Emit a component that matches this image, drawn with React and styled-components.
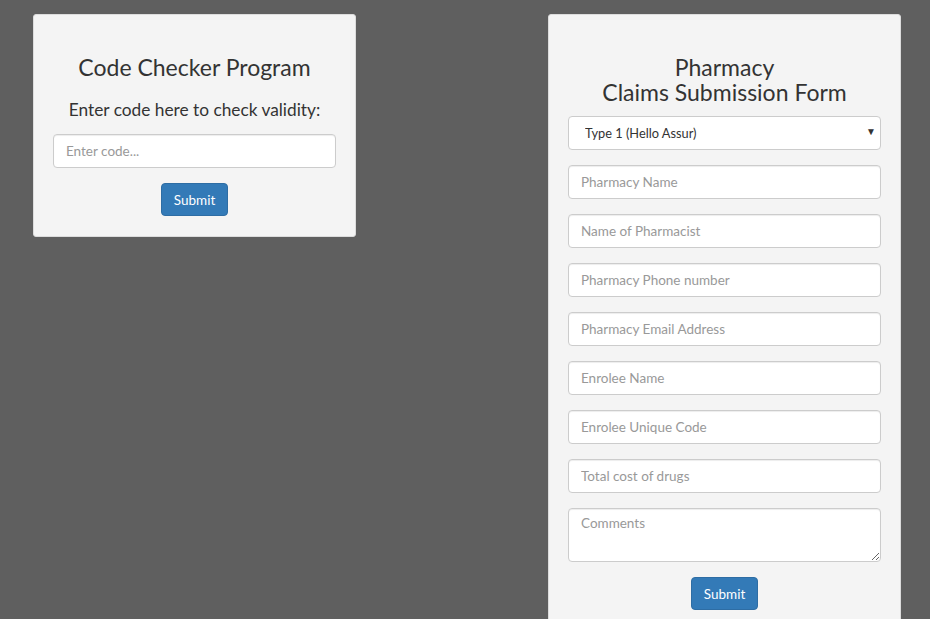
import React from "react";
import styled, { createGlobalStyle } from "styled-components";

const Global = createGlobalStyle`
  html, body { margin: 0; padding: 0; background: #5f5f5f; }
  body { font-family: Lato, "Open Sans", "Liberation Sans", sans-serif; color: #333; }
  * { box-sizing: border-box; }
`;

const Page = styled.div`
  display: flex;
  align-items: flex-start;
  gap: 192px;
  padding: 14px 0 0 33px;
  min-height: 619px;
  overflow: hidden;
`;

const Card = styled.div`
  flex: 0 0 auto;
  width: ${(p) => p.$w}px;
  background: #f4f4f4;
  border: 1px solid #dcdcdc;
  border-radius: 3px;
  padding: ${(p) => p.$top}px 19px 20px;
  display: flex;
  flex-direction: column;
  align-items: stretch;
`;

const Title = styled.h3`
  margin: 0;
  font-size: 23px;
  font-weight: 400;
  line-height: 25px;
  text-align: center;
  color: #333;
`;

const TitleLine = styled.span`
  display: block;
`;

const Sub = styled.p`
  margin: 17px 0 11px;
  font-size: 17.3px;
  line-height: 26px;
  text-align: center;
  color: #333;
`;

const Field = styled.input`
  display: block;
  width: 100%;
  height: 34px;
  padding: 6px 12px;
  font-family: inherit;
  font-size: 13.5px;
  color: #555;
  background: #fff;
  border: 1px solid #ccc;
  border-radius: 4px;
  box-shadow: inset 0 1px 1px rgba(0, 0, 0, 0.075);
  margin-bottom: 15px;
  &::placeholder { color: #999; }
`;

const Area = styled.textarea`
  display: block;
  width: 100%;
  height: 54px;
  padding: 6px 12px;
  font-family: inherit;
  font-size: 13.5px;
  color: #555;
  background: #fff;
  border: 1px solid #ccc;
  border-radius: 4px;
  box-shadow: inset 0 1px 1px rgba(0, 0, 0, 0.075);
  margin: 0 0 15px;
  &::placeholder { color: #999; }
`;

const SelectWrap = styled.div`
  position: relative;
  margin: 11px 0 15px;
`;

const Select = styled.select`
  appearance: none;
  -webkit-appearance: none;
  display: block;
  width: 100%;
  height: 34px;
  padding: 6px 16px;
  font-family: inherit;
  font-size: 12.8px;
  color: #333;
  background: #fff;
  border: 1px solid #ccc;
  border-radius: 4px;
`;

const Caret = styled.span`
  position: absolute;
  right: 5px;
  top: 9px;
  font-size: 10px;
  color: #333;
  pointer-events: none;
`;

const Button = styled.button`
  align-self: center;
  width: 67px;
  height: 33px;
  background: #337ab7;
  border: 1px solid #2e6da4;
  border-radius: 4px;
  color: #fff;
  font-family: inherit;
  font-size: 13.5px;
  padding: 0;
`;

export default function App() {
  const fields = [
    "Pharmacy Name",
    "Name of Pharmacist",
    "Pharmacy Phone number",
    "Pharmacy Email Address",
    "Enrolee Name",
    "Enrolee Unique Code",
    "Total cost of drugs",
  ];
  return (
    <>
      <Global />
      <Page>
        <Card $w={323} $top={40}>
          <Title>Code Checker Program</Title>
          <Sub>Enter code here to check validity:</Sub>
          <Field placeholder="Enter code..." />
          <Button>Submit</Button>
        </Card>
        <Card $w={353} $top={40}>
          <Title>
            <TitleLine>Pharmacy</TitleLine>
            <TitleLine>Claims Submission Form</TitleLine>
          </Title>
          <SelectWrap>
            <Select defaultValue="1">
              <option value="1">Type 1 (Hello Assur)</option>
            </Select>
            <Caret>▼</Caret>
          </SelectWrap>
          {fields.map((f) => (
            <Field key={f} placeholder={f} />
          ))}
          <Area placeholder="Comments" />
          <Button>Submit</Button>
        </Card>
      </Page>
    </>
  );
}
